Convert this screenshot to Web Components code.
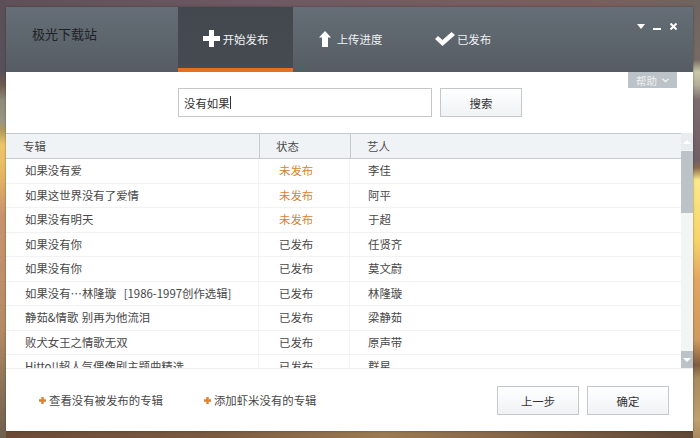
<!DOCTYPE html>
<html lang="zh">
<head>
<meta charset="utf-8">
<title>极光下载站</title>
<style>
  html, body { margin: 0; height: 100%; }
  body {
    width: 700px; height: 438px; overflow: hidden; box-sizing: border-box;
    padding: 7px 7px 7px 6px;
    font: 11.4px "Noto Sans CJK SC", "Liberation Sans", sans-serif;
    color: #484848;
    background-color: #6f5c62;
    background-repeat: no-repeat;
    background-image:
      linear-gradient(180deg, #5c5058 0, #57505a 70px, #6e5a50 85px, #8d8a78 100px, #9a9684 122px, #b09a5c 130px, #eec66a 145px, #e6b564 175px, #c8926c 215px, #c2906a 260px, #b48a64 330px, #8c7458 385px, #70604e 438px),
      linear-gradient(180deg, #6f6460 0, #766a66 60px, #c8c8a8 72px, #b2ae98 85px, #7c6c70 100px, #6f5e64 160px, #8a6a50 168px, #fbe98a 180px, #f6d468 240px, #e0a660 280px, #cd9a60 340px, #7e5c3e 365px, #a88a60 378px, #c0a070 420px, #a88a60 438px),
      linear-gradient(90deg, #6a4a34 0, #7a5a40 30%, #9c7a52 55%, #7a5c42 80%, #5e4636 100%),
      linear-gradient(90deg, #5e5058 0, #6e5a62 40%, #7a5e5e 85%, #6e6460 100%);
    background-size: 6px 100%, 7px 100%, 100% 7px, 100% 7px;
    background-position: left top, right top, left bottom, left top;
  }
</style>
</head>
<body>
<publish-window>
  <span slot="brand">极光下载站</span>

  <nav-tab slot="tabs" active icon="plus">开始发布</nav-tab>
  <nav-tab slot="tabs" icon="up">上传进度</nav-tab>
  <nav-tab slot="tabs" icon="check">已发布</nav-tab>

  <search-bar slot="search" value="没有如果"></search-bar>

  <album-table slot="table">
    <album-row name="如果没有爱" status="未发布" artist="李佳" pending></album-row>
    <album-row name="如果这世界没有了爱情" status="未发布" artist="阿平" pending></album-row>
    <album-row name="如果没有明天" status="未发布" artist="于超" pending></album-row>
    <album-row name="如果没有你" status="已发布" artist="任贤齐"></album-row>
    <album-row name="如果没有你" status="已发布" artist="莫文蔚"></album-row>
    <album-row name="如果没有…林隆璇 [1986-1997创作选辑]" status="已发布" artist="林隆璇" style="word-spacing:5px"></album-row>
    <album-row name="静茹&amp;情歌 别再为他流泪" status="已发布" artist="梁静茹" style="word-spacing:1px"></album-row>
    <album-row name="败犬女王之情歌无双" status="已发布" artist="原声带"></album-row>
    <album-row name="Hitto!!超人气偶像剧主题曲精选" status="已发布" artist="群星"></album-row>
  </album-table>

  <plus-link slot="links">查看没有被发布的专辑</plus-link>
  <plus-link slot="links">添加虾米没有的专辑</plus-link>
  <flat-button slot="actions">上一步</flat-button>
  <flat-button slot="actions">确定</flat-button>
</publish-window>

<script>
const ICONS = {
  plus: '<svg width="17" height="17" viewBox="0 0 17 17"><path fill="#fff" d="M6 0h5v6h6v5h-6v6H6v-6H0V6h6z"/></svg>',
  up: '<svg width="12" height="16" viewBox="0 0 12 16"><path fill="#fff" d="M6 0 12 6.500H9V16H3V6.500H0z"/></svg>',
  check: '<svg width="20" height="14" viewBox="0 0 20 14"><path fill="#fff" d="M0 7l3-3 4.500 4L16.500 0 20 3 7.500 14z"/></svg>'
};

class PublishWindow extends HTMLElement {
  constructor() {
    super();
    this.attachShadow({ mode: 'open' }).innerHTML = `
      <style>
        :host { display: flex; flex-direction: column; position: relative; width: 687px; height: 424px; background: #fff; box-shadow: 0 0 2px rgba(40,30,20,.5); }
        header { display: flex; height: 65px; flex: none; background: linear-gradient(180deg, #656e76, #555c64); }
        .brand { width: 172px; box-sizing: border-box; padding: 18px 0 0 26px; font-size: 13px; line-height: 18px; color: #1e2226; }
        .tabs { display: flex; }
        .ctl { position: absolute; top: 16px; right: 16px; display: flex; align-items: flex-start; gap: 8px; }
        .ctl svg { display: block; }
        .ctl svg:first-child { margin-top: 1px; }
        .ctl svg:nth-child(2) { margin-top: 5px; }
        .ctl svg:last-child { margin-left: 1px; }
        .help { position: absolute; top: 65px; left: 622px; width: 49px; height: 16px; box-sizing: border-box; background: #bcc3c8; color: #eef0f2; font-size: 10.500px; line-height: 15px; display: flex; align-items: center; justify-content: center; gap: 5px; }
        .search { box-sizing: border-box; padding: 16px 0 0 172px; height: 45px; flex: none; }
        .table { margin-top: 16px; flex: none; height: 236px; }
        footer { flex: 1; display: flex; padding: 17px 24px 0 33px; justify-content: space-between; }
        .links { display: flex; gap: 41px; padding-top: 6px; }
        .actions { display: flex; gap: 8px; }
      </style>
      <header>
        <div class="brand"><slot name="brand"></slot></div>
        <div class="tabs"><slot name="tabs"></slot></div>
      </header>
      <div class="ctl">
        <svg width="8" height="5" viewBox="0 0 8 5"><path fill="#fff" d="M0 0h8L4 5z"/></svg>
        <svg width="8" height="2" viewBox="0 0 8 2"><rect width="8" height="2" fill="#fff"/></svg>
        <svg width="7" height="7" viewBox="0 0 7 7"><path stroke="#fff" stroke-width="2" d="M.5.5l6 6M6.500.5l-6 6"/></svg>
      </div>
      <div class="help">帮助<svg width="7" height="5" viewBox="0 0 7 5"><path fill="none" stroke="#eef0f2" stroke-width="1.300" d="M.5.8 3.500 3.800 6.500.8"/></svg></div>
      <div class="search"><slot name="search"></slot></div>
      <div class="table"><slot name="table"></slot></div>
      <footer>
        <div class="links"><slot name="links"></slot></div>
        <div class="actions"><slot name="actions"></slot></div>
      </footer>`;
  }
}

class NavTab extends HTMLElement {
  connectedCallback() {
    this.attachShadow({ mode: 'open' }).innerHTML = `
      <style>
        :host { display: block; width: 115px; height: 65px; box-sizing: border-box; color: #f0f2f3; font-size: 11.400px; }
        :host([active]) { background: linear-gradient(180deg, #43484f, #464b52); border-bottom: 4px solid #e8701c; }
        div { display: flex; align-items: center; justify-content: center; gap: 3px; height: 65px; box-sizing: border-box; padding-bottom: 2px; }
        svg { flex: none; }
        :host([icon="up"]) div { gap: 6px; }
        :host([icon="check"]) div { gap: 2px; padding-right: 5px; }
      </style>
      <div>${ICONS[this.getAttribute('icon')]}<span><slot></slot></span></div>`;
  }
}

class SearchBar extends HTMLElement {
  connectedCallback() {
    this.attachShadow({ mode: 'open' }).innerHTML = `
      <style>
        :host { display: flex; gap: 8px; }
        .box { width: 254px; height: 29px; box-sizing: border-box; border: 1px solid #c4c6c8; padding-left: 5px; display: flex; align-items: center; color: #333; font-size: 11.400px; }
        .caret { width: 1px; height: 13px; background: #333; }
      </style>
      <div class="box"><span>${this.getAttribute('value')}</span><span class="caret"></span></div>
      <flat-button>搜索</flat-button>`;
  }
}

class FlatButton extends HTMLElement {
  constructor() {
    super();
    this.attachShadow({ mode: 'open' }).innerHTML = `
      <style>
        :host { display: flex; align-items: center; justify-content: center; width: 82px; height: 29px; box-sizing: border-box; border: 1px solid #c4c8cc; background: linear-gradient(180deg, #fff, #f0f2f4); color: #333; font-size: 11.400px; }
      </style>
      <slot></slot>`;
  }
}

class AlbumTable extends HTMLElement {
  constructor() {
    super();
    this.attachShadow({ mode: 'open' }).innerHTML = `
      <style>
        :host { display: block; position: relative; height: 236px; overflow: hidden; border-bottom: 1px solid #f0f0f0; box-sizing: border-box; }
        .grid { display: flex; height: 100%; }
        .main { flex: 1; min-width: 0; overflow: hidden; }
        .head { display: grid; grid-template-columns: 253px 91px 1fr; height: 26px; box-sizing: border-box; background: #f0f3f5; border-top: 1px solid #c6cacd; border-bottom: 1px solid #c9cccf; line-height: 24px; color: #484848; }
        .head span { padding-left: 17px; }
        .head span + span { border-left: 1px solid #c6cacd; padding-left: 16px; }
        .bar { width: 12px; flex: none; display: flex; flex-direction: column; background: #f3f4f4; }
        .btn { height: 17px; flex: none; background: #e9ecee; display: flex; align-items: center; justify-content: center; }
        .btn.down { background: #bcc3c8; margin-top: auto; }
        .thumb { height: 62px; background: #bcc3c8; flex: none; margin-top: 1px; }
      </style>
      <div class="grid">
        <div class="main">
          <div class="head"><span>专辑</span><span>状态</span><span>艺人</span></div>
          <slot></slot>
        </div>
        <div class="bar">
          <div class="btn"><svg width="8" height="4" viewBox="0 0 8 4"><path fill="#fff" d="M0 4h8L4 0z"/></svg></div>
          <div class="thumb"></div>
          <div class="btn down"><svg width="8" height="4" viewBox="0 0 8 4"><path fill="#fff" d="M0 0h8L4 4z"/></svg></div>
        </div>
      </div>`;
  }
}

class AlbumRow extends HTMLElement {
  connectedCallback() {
    const g = (n) => this.getAttribute(n);
    this.attachShadow({ mode: 'open' }).innerHTML = `
      <style>
        :host { display: grid; grid-template-columns: 253px 91px 1fr; height: 24.500px; box-sizing: border-box; border-bottom: 1px solid #f2f2f2; line-height: 22.500px; color: #484848; }
        span { white-space: nowrap; }
        .name { padding-left: 19px; border-right: 1px solid #f4f4f4; }
        .status { padding-left: 20px; border-right: 1px solid #f4f4f4; }
        :host([pending]) .status { color: #d08535; }
        .artist { padding-left: 18px; }
      </style>
      <span class="name">${g('name').replace('&', '&amp;')}</span>
      <span class="status">${g('status')}</span>
      <span class="artist">${g('artist')}</span>`;
  }
}

class PlusLink extends HTMLElement {
  constructor() {
    super();
    this.attachShadow({ mode: 'open' }).innerHTML = `
      <style>
        :host { display: flex; align-items: center; gap: 3px; height: 16px; color: #484848; font-size: 11.400px; }
        svg { flex: none; }
      </style>
      <svg width="7" height="7" viewBox="0 0 7 7"><path fill="#e0802f" d="M2.300 0h2.400v2.300H7v2.400H4.700V7H2.300V4.700H0V2.300h2.300z"/></svg>
      <slot></slot>`;
  }
}

customElements.define('publish-window', PublishWindow);
customElements.define('nav-tab', NavTab);
customElements.define('search-bar', SearchBar);
customElements.define('flat-button', FlatButton);
customElements.define('album-table', AlbumTable);
customElements.define('album-row', AlbumRow);
customElements.define('plus-link', PlusLink);
</script>
</body>
</html>
